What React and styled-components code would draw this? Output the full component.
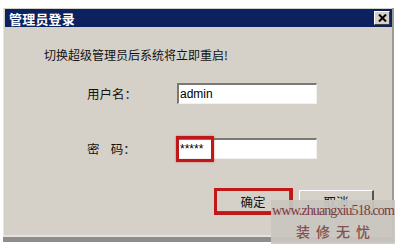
import React from "react";
import styled, { createGlobalStyle } from "styled-components";

const Global = createGlobalStyle`
  html, body { margin: 0; padding: 0; background: #ffffff; }
  body { font-family: "Noto Sans CJK SC", "Liberation Sans", sans-serif; }
`;

const Page = styled.div`
  width: 400px;
  height: 244px;
  overflow: hidden;
  position: relative;
  padding: 8px 0 0 3px;
  box-sizing: border-box;
`;

const Window = styled.div`
  width: 391px;
  height: 229px;
  background: #d5d1c9;
  border-left: 1px solid #e8e6e1;
  border-right: 2px solid #9c9a95;
  border-bottom: 2px solid #e4e2dc;
  box-shadow: 0 5px 0 #8f8d89;
  box-sizing: border-box;
  display: flex;
  flex-direction: column;
`;

const TitleBar = styled.div`
  height: 18px;
  margin: 1px 0 0 1px;
  background: #0c2160;
  display: flex;
  align-items: center;
  justify-content: space-between;
  padding: 0 2px 0 4px;
`;

const Title = styled.span`
  color: #ffffff;
  font-size: 13px;
  font-weight: 700;
  letter-spacing: 0.2px;
`;

const CloseBtn = styled.div`
  width: 16px;
  height: 14px;
  background: #d5d1c9;
  border-top: 1px solid #ffffff;
  border-left: 1px solid #ffffff;
  border-right: 1px solid #404040;
  border-bottom: 1px solid #404040;
  box-sizing: border-box;
  display: flex;
  align-items: center;
  justify-content: center;
`;

const Message = styled.div`
  margin: 20px 0 0 40px;
  font-size: 12px;
  color: #111;
  line-height: 16px;
`;

const Form = styled.div`
  display: grid;
  grid-template-columns: 90px 140px;
  row-gap: 34px;
  margin: 20px 0 0 83px;
  align-items: center;
`;

const Label = styled.div`
  font-size: 12.5px;
  color: #111;
  white-space: pre;
`;

const Input = styled.div`
  position: relative;
  height: 21px;
  background: #ffffff;
  border-top: 2px solid #7b7974;
  border-left: 2px solid #7b7974;
  border-right: 1px solid #f2f1ee;
  border-bottom: 1px solid #f2f1ee;
  box-sizing: border-box;
  font-family: "Liberation Sans", sans-serif;
  font-size: 12px;
  color: #000;
  padding-left: 1px;
  display: flex;
  align-items: center;
`;

const Highlight = styled.div`
  position: absolute;
  left: -3px;
  top: -4px;
  width: 38px;
  height: 26px;
  border: 3px solid #c01818;
  box-sizing: border-box;
  box-shadow: 0 0 2px rgba(200, 30, 30, 0.5);
`;

const Buttons = styled.div`
  display: flex;
  gap: 8px;
  margin: 31px 0 0 212px;
`;

const Button = styled.div`
  position: relative;
  width: 75px;
  height: 23px;
  background: #d5d1c9;
  border-top: 1px solid #ffffff;
  border-left: 1px solid #ffffff;
  border-right: 2px solid #555;
  border-bottom: 2px solid #555;
  box-sizing: border-box;
  display: flex;
  align-items: center;
  justify-content: center;
  font-size: 12.5px;
  color: #111;
  outline: ${(p) => (p.$marked ? "3px solid #c01818" : "none")};
  outline-offset: -1px;
`;

const Watermark = styled.div`
  position: absolute;
  left: 271px;
  top: 200px;
  width: 124px;
  height: 44px;
  background: rgba(201, 198, 193, 0.93);
  display: flex;
  flex-direction: column;
  align-items: center;
  font-family: "Liberation Serif", serif;
  color: #7a3a3a;
`;

const WmUrl = styled.div`
  font-size: 14px;
  line-height: 17px;
  margin-top: 2px;
  letter-spacing: -0.9px;
  white-space: nowrap;
`;

const WmCn = styled.div`
  font-family: "Noto Sans CJK SC", serif;
  font-weight: 500;
  font-size: 14px;
  line-height: 18px;
  letter-spacing: 6px;
  margin: 3px 0 0 6px;
  color: #84504e;
`;

export default function App() {
  return (
    <>
      <Global />
      <Page>
        <Window>
          <TitleBar>
            <Title>管理员登录</Title>
            <CloseBtn>
              <svg width="9" height="8" viewBox="0 0 9 8">
                <path d="M1 0.5 L8 7.5 M8 0.5 L1 7.5" stroke="#000" strokeWidth="2" />
              </svg>
            </CloseBtn>
          </TitleBar>
          <Message>切换超级管理员后系统将立即重启!</Message>
          <Form>
            <Label>用户名：</Label>
            <Input>admin</Input>
            <Label>{"密    码："}</Label>
            <Input>
              *****
              <Highlight />
            </Input>
          </Form>
          <Buttons>
            <Button $marked>确定</Button>
            <Button>取消</Button>
          </Buttons>
        </Window>
        <Watermark>
          <WmUrl>www.zhuangxiu518.com</WmUrl>
          <WmCn>装修无忧</WmCn>
        </Watermark>
      </Page>
    </>
  );
}
